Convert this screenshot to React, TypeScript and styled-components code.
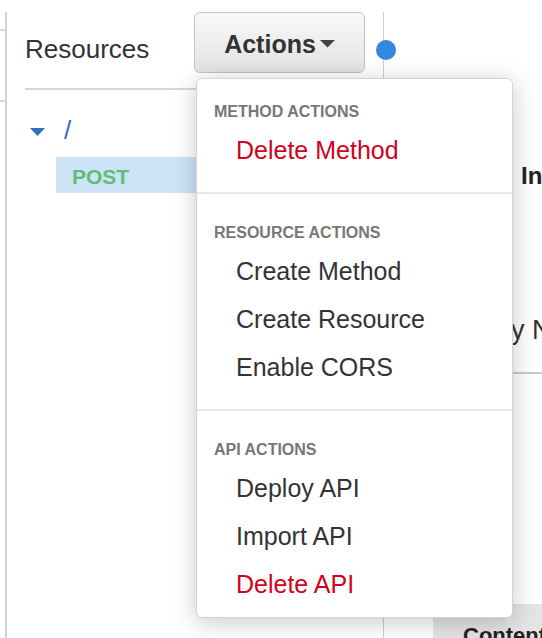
import styled, { createGlobalStyle } from 'styled-components';

const GlobalStyle = createGlobalStyle`
  html, body {
    margin: 0;
    padding: 0;
    background: #fff;
  }
  body {
    font-family: "Liberation Sans", Arial, Helvetica, sans-serif;
    color: #333;
  }
`;

const Page = styled.div`
  display: flex;
  height: 638px;
  overflow: hidden;
  background: #fff;
`;

const Rail = styled.div`
  width: 5px;
  flex-shrink: 0;
  padding-top: 29px;
  display: flex;
  flex-direction: column;
`;

const Tick = styled.div<{ offset: number }>`
  height: 2px;
  margin-top: ${({ offset }) => offset}px;
  background: #dadada;
`;

const Sidebar = styled.aside`
  position: relative;
  box-sizing: border-box;
  width: 379px;
  flex-shrink: 0;
  margin-top: 12px;
  border-left: 2px solid #d2d2d2;
  border-right: 1px solid #cfcfcf;
`;

const SidebarHeader = styled.div`
  display: flex;
  justify-content: space-between;
  align-items: flex-start;
  height: 76px;
  margin: 0 18px;
  border-bottom: 2px solid #d6d6d6;
`;

const Title = styled.h2`
  margin: 22px 0 0;
  font-size: 26px;
  line-height: 30px;
  font-weight: 400;
  color: #333;
`;

const ActionsWrap = styled.div`
  position: relative;
`;

const ActionsButton = styled.button`
  box-sizing: border-box;
  display: flex;
  align-items: center;
  justify-content: center;
  gap: 4px;
  width: 171px;
  height: 61px;
  padding: 3px 0 0;
  border: 1.5px solid #c2c2c2;
  border-radius: 6px;
  background: linear-gradient(#f9f9f9, #e2e2e2);
  font-family: inherit;
  font-size: 25px;
  font-weight: 700;
  color: #333;
  cursor: pointer;
`;

const Menu = styled.div`
  position: absolute;
  z-index: 5;
  top: 66px;
  left: 2px;
  box-sizing: border-box;
  width: 317px;
  background: #fff;
  border: 1px solid #d3d3d3;
  border-radius: 6px;
  box-shadow: 0 4px 24px rgba(0, 0, 0, 0.22);
`;

const MenuSection = styled.div`
  padding: 29px 0 18px;
  & + & {
    border-top: 2px solid #e6e6e6;
  }
  &:first-child {
    padding-top: 23px;
  }
  &:last-child {
    padding-bottom: 9px;
  }
`;

const MenuHeading = styled.div`
  padding-left: 17px;
  margin-bottom: 4px;
  font-size: 16px;
  line-height: 20px;
  font-weight: 700;
  color: #777;
  text-transform: uppercase;
`;

const MenuItem = styled.div<{ danger?: boolean }>`
  padding-left: 39px;
  font-size: 25px;
  line-height: 48px;
  color: ${({ danger }) => (danger ? '#d0021b' : '#333')};
  cursor: pointer;
`;

const Handle = styled.span`
  position: absolute;
  z-index: 3;
  top: 28px;
  right: -13px;
  width: 20px;
  height: 20px;
  border-radius: 50%;
  background: #3586e0;
`;

const Tree = styled.div`
  padding-top: 22px;
`;

const RootRow = styled.div`
  display: flex;
  align-items: center;
  height: 36px;
  margin-bottom: 9px;
  padding-left: 23px;
`;

const RootCaret = styled.svg`
  margin-right: 19px;
  margin-top: 3px;
`;

const RootPath = styled.span`
  font-size: 26px;
  color: #2f6fc0;
`;

const MethodRow = styled.div`
  display: flex;
  align-items: center;
  height: 36px;
  box-sizing: border-box;
  padding: 3px 0 0 16px;
  margin-left: 49px;
  background: #cde3f8;
`;

const MethodName = styled.span`
  font-size: 21px;
  font-weight: 700;
  color: #62bd73;
`;

const Content = styled.main`
  flex: 1;
  display: flex;
  flex-direction: column;
  min-width: 0;
  overflow: hidden;
  white-space: nowrap;
`;

const FlowRow = styled.div`
  display: flex;
  margin: 162px 0 0 34px;
`;

const FlowLabel = styled.span<{ width?: number }>`
  flex-shrink: 0;
  width: ${({ width }) => (width ? `${width}px` : 'auto')};
  font-size: 24px;
  line-height: 28px;
  font-weight: 700;
  color: #222;
`;

const ContentTitle = styled.div`
  margin: 124px 0 0 34px;
  font-size: 27px;
  line-height: 32px;
  color: #333;
`;

const ContentRule = styled.hr`
  margin: 26px 0 0;
  border: 0;
  border-top: 2px solid #cbcbcb;
`;

const TabBar = styled.div`
  display: flex;
  margin-top: auto;
  padding-left: 49px;
`;

const Tab = styled.div`
  flex: 1;
  height: 34px;
  box-sizing: border-box;
  padding: 19px 0 0 30px;
  background: #e4e4e4;
  font-size: 22px;
  line-height: 26px;
  font-weight: 700;
  color: #222;
`;

const menu = [
  {
    heading: 'Method actions',
    items: [{ label: 'Delete Method', danger: true }]
  },
  {
    heading: 'Resource actions',
    items: [
      { label: 'Create Method' },
      { label: 'Create Resource' },
      { label: 'Enable CORS' }
    ]
  },
  {
    heading: 'API actions',
    items: [
      { label: 'Deploy API' },
      { label: 'Import API' },
      { label: 'Delete API', danger: true }
    ]
  }
];

const App = (): JSX.Element => (
  <>
    <GlobalStyle />
    <Page>
      <Rail>
        <Tick offset={0} />
        <Tick offset={69} />
      </Rail>
      <Sidebar>
        <SidebarHeader>
          <Title>Resources</Title>
          <ActionsWrap>
            <ActionsButton type="button">
              Actions
              <svg width="15" height="8" viewBox="0 0 15 8">
                <polygon points="0,0 15,0 7.5,7.5" fill="#444" />
              </svg>
            </ActionsButton>
            <Menu>
              {menu.map((section) => (
                <MenuSection key={section.heading}>
                  <MenuHeading>{section.heading}</MenuHeading>
                  {section.items.map((item) => (
                    <MenuItem key={item.label} danger={item.danger}>
                      {item.label}
                    </MenuItem>
                  ))}
                </MenuSection>
              ))}
            </Menu>
          </ActionsWrap>
        </SidebarHeader>
        <Tree>
          <RootRow>
            <RootCaret width="15" height="8" viewBox="0 0 15 8">
              <polygon points="0,0 15,0 7.5,8" fill="#2f72c0" />
            </RootCaret>
            <RootPath>/</RootPath>
          </RootRow>
          <MethodRow>
            <MethodName>POST</MethodName>
          </MethodRow>
        </Tree>
        <Handle />
      </Sidebar>
      <Content>
        <FlowRow>
          <FlowLabel width={103}>Method</FlowLabel>
          <FlowLabel>Integration Request</FlowLabel>
        </FlowRow>
        <ContentTitle>Gateway Name</ContentTitle>
        <ContentRule />
        <TabBar>
          <Tab>Content-Type</Tab>
        </TabBar>
      </Content>
    </Page>
  </>
);

export default App;
